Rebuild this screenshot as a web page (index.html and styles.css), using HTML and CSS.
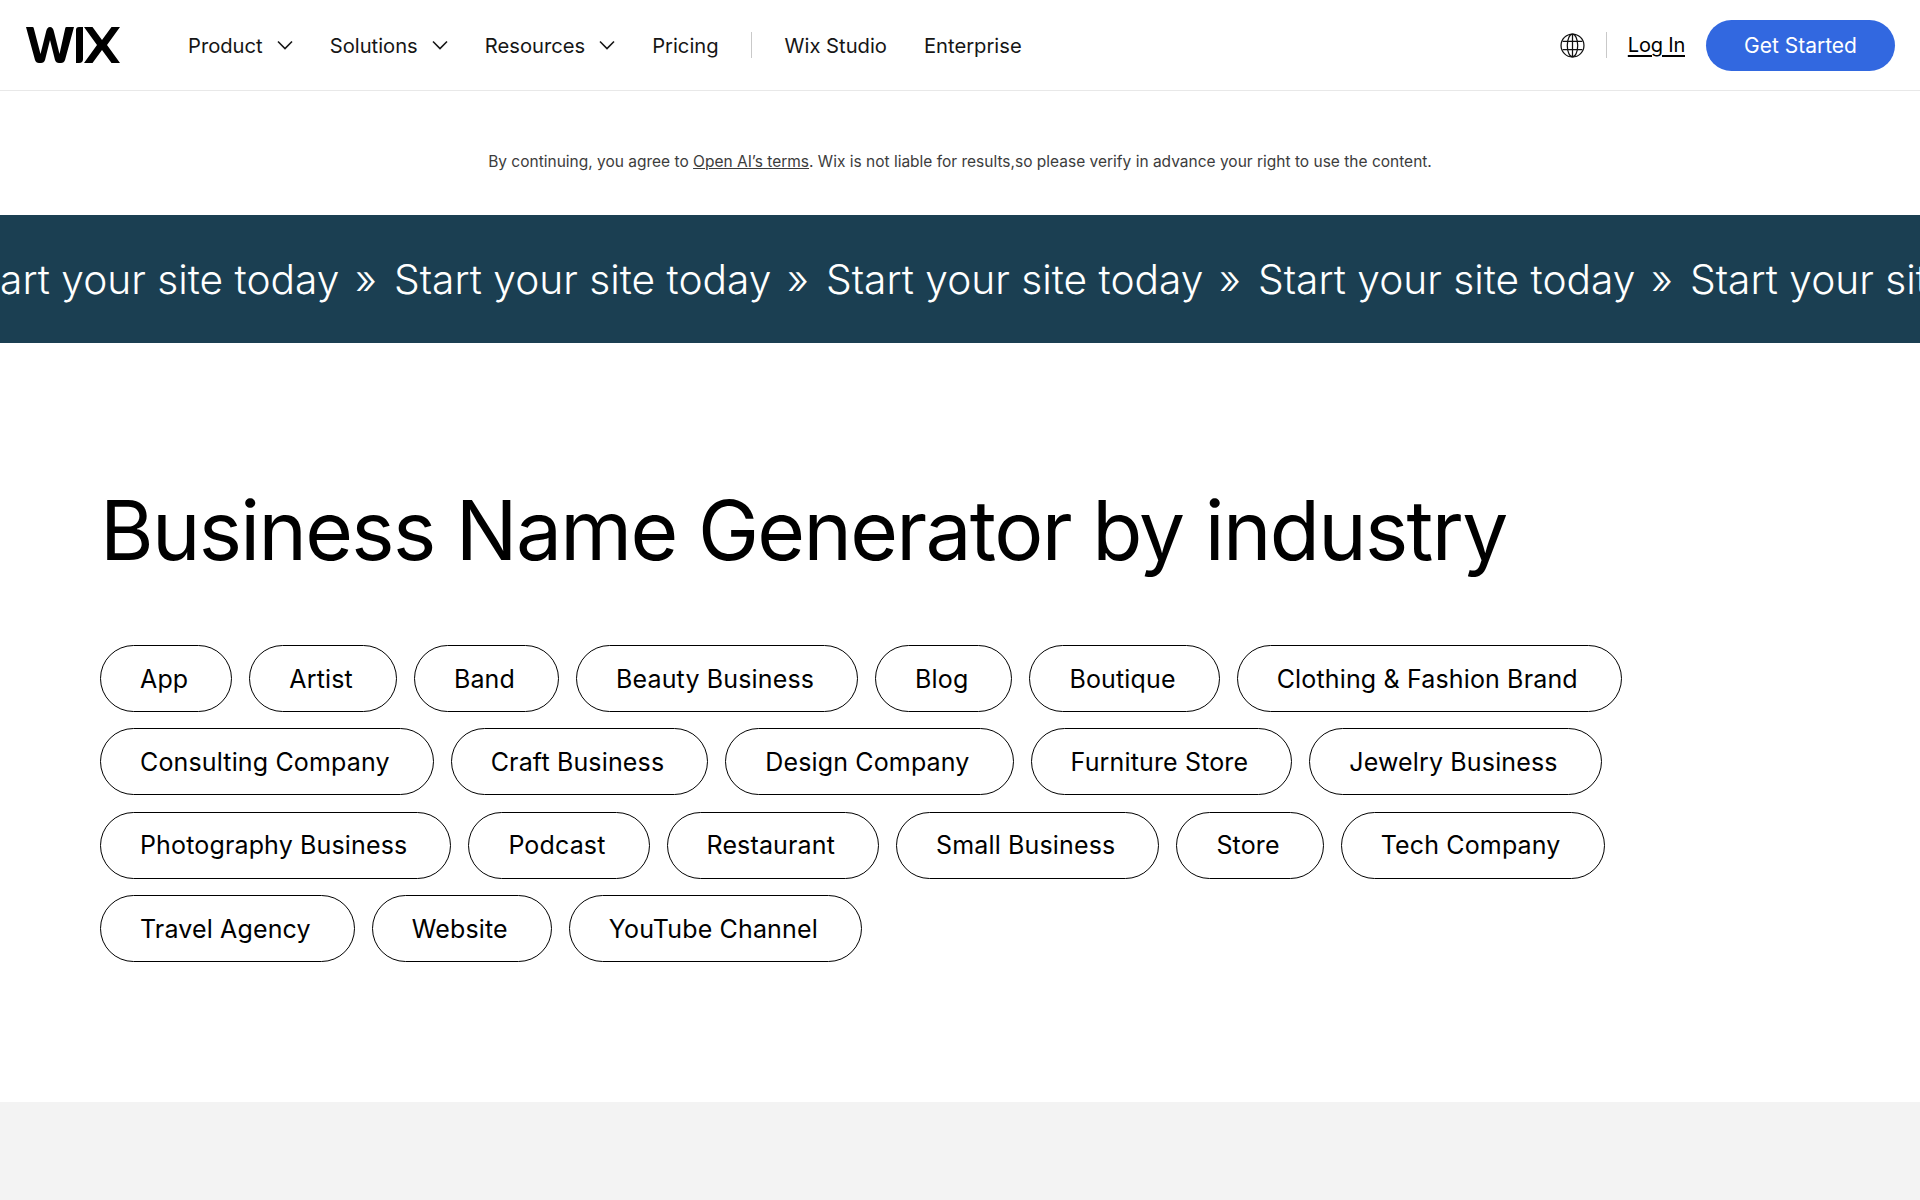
FILE: index.html
```html
<!DOCTYPE html>
<html lang="en">
<head>
    <meta charset="UTF-8">
    <meta name="viewport" content="width=device-width, initial-scale=1.0">
    <title>Business Name Generator</title>
    <link rel="stylesheet" href="styles.css">
</head>
<body>
    <header class="site-header">
        <a class="logo" href="#" aria-label="Wix">
            <svg width="94" height="36" viewBox="0 0 94 36">
                <path d="M0 0h6.500q1 0 1.200 1L14.500 27 20 5q1-5 4-5t4 5l5.500 22L39.300 1q.2-1 1.200-1H48L39 33q-1 3-4 3h-2q-3 0-4-3L24 13l-5 20q-1 3-4 3h-2q-3 0-4-3z"/>
                <path d="M50 3q0-3 3-3h4v32q0 4-4 4h-3z"/>
                <path d="M58 0h8.500L76 13l9.500-13H94L81 18l13 18h-8.500L76 23l-9.500 13H58l13-18z"/>
            </svg>
        </a>
        <nav class="main-nav">
            <a class="nav-link" href="#">Product <svg class="chevron" viewBox="0 0 16 10"><path d="M1 1.500l7 7 7-7"/></svg></a>
            <a class="nav-link" href="#">Solutions <svg class="chevron" viewBox="0 0 16 10"><path d="M1 1.500l7 7 7-7"/></svg></a>
            <a class="nav-link" href="#">Resources <svg class="chevron" viewBox="0 0 16 10"><path d="M1 1.500l7 7 7-7"/></svg></a>
            <a class="nav-link" href="#">Pricing</a>
            <span class="nav-sep nav-sep-main"></span>
            <a class="nav-link" href="#">Wix Studio</a>
            <a class="nav-link" href="#">Enterprise</a>
        </nav>
        <div class="nav-right">
            <svg class="globe" viewBox="0 0 24 24">
                <circle cx="12" cy="12" r="11"/>
                <ellipse cx="12" cy="12" rx="5" ry="11"/>
                <path d="M12 1v22M2.500 8h19M2.500 16h19"/>
            </svg>
            <span class="nav-sep"></span>
            <a class="login" href="#">Log In</a>
            <a class="get-started" href="#">Get Started</a>
        </div>
    </header>

    <p class="terms">By continuing, you agree to <a href="#">Open AI’s terms</a>. Wix is not liable for results,so please verify in advance your right to use the content.</p>

    <div class="marquee">
        <div class="marquee-track">
            <span class="marquee-item">Start your site today</span><span class="marquee-arrow">»</span>
            <span class="marquee-item">Start your site today</span><span class="marquee-arrow">»</span>
            <span class="marquee-item">Start your site today</span><span class="marquee-arrow">»</span>
            <span class="marquee-item">Start your site today</span><span class="marquee-arrow">»</span>
            <span class="marquee-item">Start your site today</span><span class="marquee-arrow">»</span>
        </div>
    </div>

    <main class="industries">
        <h1>Business Name Generator by industry</h1>
        <div class="pill-list">
            <a class="pill" href="#">App</a>
            <a class="pill" href="#">Artist</a>
            <a class="pill" href="#">Band</a>
            <a class="pill" href="#">Beauty Business</a>
            <a class="pill" href="#">Blog</a>
            <a class="pill" href="#">Boutique</a>
            <a class="pill" href="#">Clothing &amp; Fashion Brand</a>
            <a class="pill" href="#">Consulting Company</a>
            <a class="pill" href="#">Craft Business</a>
            <a class="pill" href="#">Design Company</a>
            <a class="pill" href="#">Furniture Store</a>
            <a class="pill" href="#">Jewelry Business</a>
            <a class="pill" href="#">Photography Business</a>
            <a class="pill" href="#">Podcast</a>
            <a class="pill" href="#">Restaurant</a>
            <a class="pill" href="#">Small Business</a>
            <a class="pill" href="#">Store</a>
            <a class="pill" href="#">Tech Company</a>
            <a class="pill" href="#">Travel Agency</a>
            <a class="pill" href="#">Website</a>
            <a class="pill" href="#">YouTube Channel</a>
        </div>
    </main>

    <div class="gray-band"></div>
</body>
</html>
```

FILE: styles.css
```css
:root {
    --text-color: #000;
    --blue: #3268e0;
    --teal: #1b3f52;
    --line: #e8e8e8;
}

* {
    margin: 0;
    padding: 0;
    box-sizing: border-box;
    font-family: 'Inter', 'Liberation Sans', sans-serif;
}

html,
body {
    height: 100%;
}

body {
    display: flex;
    flex-direction: column;
    background-color: #fff;
    color: var(--text-color);
    overflow: hidden;
}

a {
    color: inherit;
    text-decoration: none;
}

/* header */
.site-header {
    display: flex;
    align-items: center;
    height: 91px;
    padding: 0 25px;
    border-bottom: 1px solid var(--line);
}

.logo {
    display: flex;
    width: 163px;
    padding-left: 1px;
    fill: #000;
}

.main-nav {
    display: flex;
    align-items: center;
    gap: 37px;
}

.nav-link {
    display: flex;
    align-items: center;
    gap: 14px;
    font-size: 20.2px;
    color: #161616;
}

.chevron {
    width: 16px;
    height: 10px;
    fill: none;
    stroke: #161616;
    stroke-width: 1.6;
}

.nav-sep {
    width: 1px;
    height: 26px;
    background-color: #c9c9c9;
}

.nav-sep-main {
    margin: 0 -4.500px;
}

.nav-right {
    display: flex;
    align-items: center;
    margin-left: auto;
}

.globe {
    width: 25px;
    height: 25px;
    fill: none;
    stroke: #111;
    stroke-width: 1.2;
    margin-right: 21px;
}

.login {
    margin: 0 21px;
    font-size: 20px;
    letter-spacing: -0.2px;
    text-decoration: underline;
    text-underline-offset: 3px;
}

.get-started {
    display: flex;
    align-items: center;
    justify-content: center;
    width: 189px;
    height: 51px;
    border-radius: 26px;
    background-color: var(--blue);
    color: #fff;
    font-size: 21px;
}

/* terms line */
.terms {
    padding: 61px 0 43px;
    text-align: center;
    font-size: 15.5px;
    line-height: 20px;
    color: #3c3c3c;
}

.terms a {
    text-decoration: underline;
}

/* scrolling banner */
.marquee {
    display: flex;
    align-items: center;
    height: 128px;
    overflow: hidden;
    background-color: var(--teal);
    color: #fff;
}

.marquee-track {
    display: flex;
    flex: none;
    align-items: center;
    margin-left: -38px;
    white-space: nowrap;
    font-size: 40.7px;
    font-weight: 300;
}

.marquee-item {
    width: 393px;
}

.marquee-arrow {
    width: 39px;
}

/* industries */
.industries {
    flex: 1;
    padding: 140px 100px 0;
}

h1 {
    font-size: 82px;
    font-weight: 400;
    line-height: 96px;
    letter-spacing: -1.7px;
    margin-bottom: 66px;
}

.pill-list {
    display: flex;
    flex-wrap: wrap;
    gap: 16.400px 17px;
    max-width: 1560px;
}

.pill {
    display: flex;
    align-items: center;
    height: 67px;
    padding: 0 43px 0 39px;
    border: 1.5px solid #000;
    border-radius: 34px;
    font-size: 25px;
    letter-spacing: 0.15px;
    color: #000;
}

.gray-band {
    height: 98px;
    background-color: #f3f3f3;
}
```
